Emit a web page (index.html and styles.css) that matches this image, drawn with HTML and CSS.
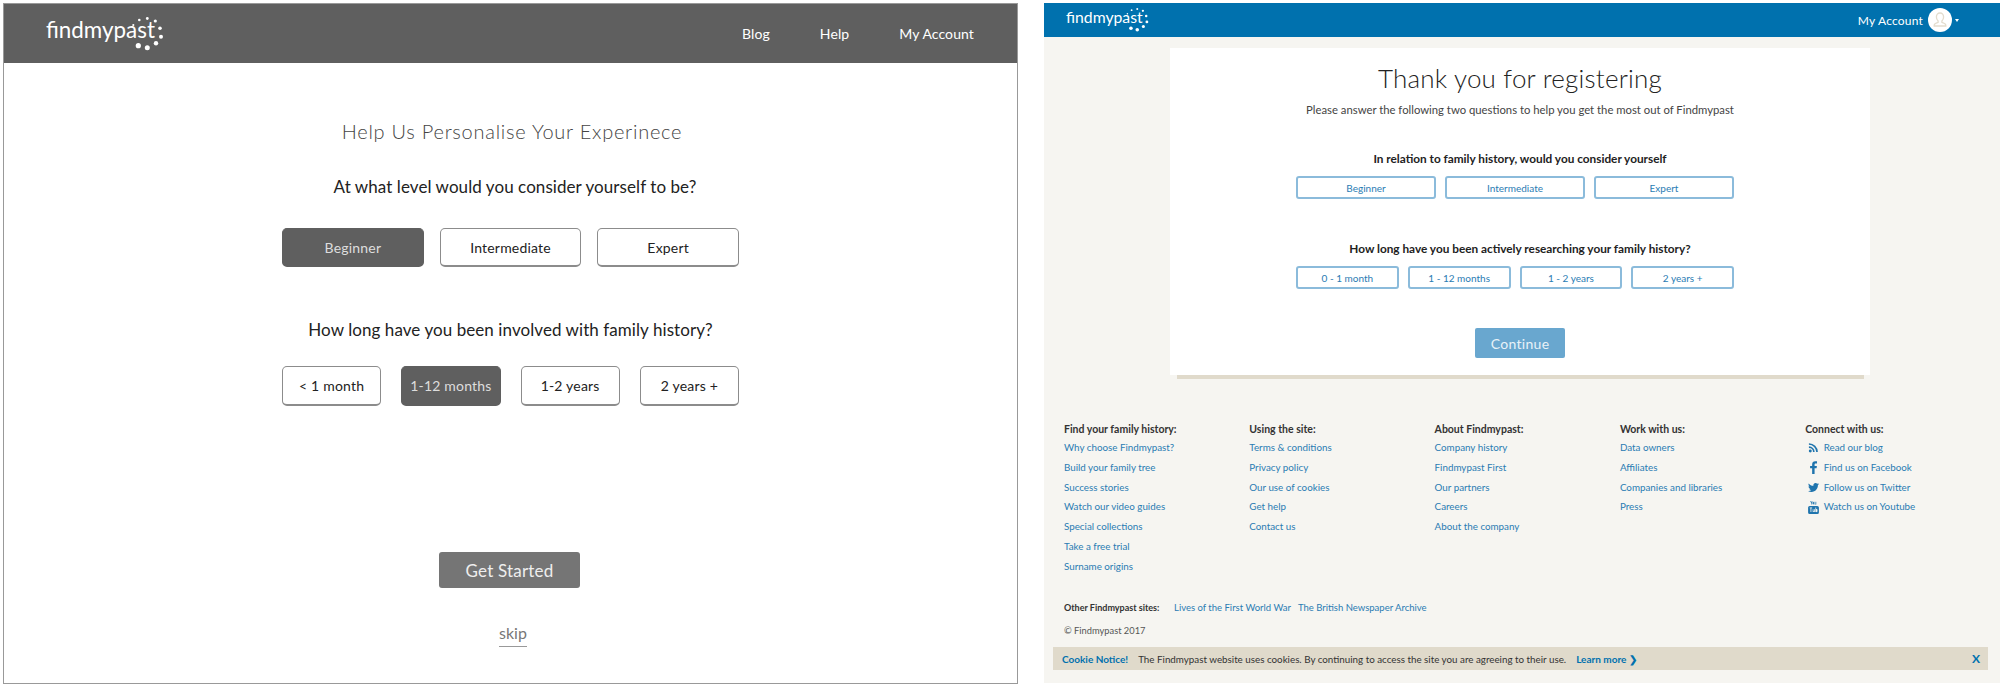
FILE: index.html
```html
<!DOCTYPE html>
<html lang="en">

<head>
    <meta charset="UTF-8">
    <meta name="viewport" content="width=device-width, initial-scale=1.0">
    <title>Findmypast onboarding</title>
    <link rel="stylesheet" href="styles.css">
</head>

<body>
    <div class="page">

        <!-- wireframe -->
        <section class="wire">
            <header class="wire-top">
                <svg class="logo-big" viewBox="0 0 118 34" aria-label="findmypast">
                    <text class="logo-text" x="0" y="21" textLength="109" lengthAdjust="spacingAndGlyphs">findmypast</text>
                    <g class="logo-dots">
                        <circle cx="87.3" cy="8" r="1.1"></circle>
                        <circle cx="93.3" cy="3" r="1.3"></circle>
                        <circle cx="101.3" cy="1.5" r="1.4"></circle>
                        <circle cx="109.3" cy="4" r="1.6"></circle>
                        <circle cx="114" cy="11.3" r="1.8"></circle>
                        <circle cx="115" cy="19.7" r="2"></circle>
                        <circle cx="110" cy="26.3" r="2.2"></circle>
                        <circle cx="101.3" cy="30.7" r="2.5"></circle>
                        <circle cx="92.3" cy="28.7" r="2.6"></circle>
                    </g>
                </svg>
                <nav class="wire-nav">
                    <a>Blog</a>
                    <a>Help</a>
                    <a>My Account</a>
                </nav>
            </header>

            <div class="wire-main">
                <h1 class="wire-title">Help Us Personalise Your Experinece</h1>
                <p class="wire-q wire-q-first">At what level would you consider yourself to be?</p>
                <div class="wire-row wire-row-three">
                    <a class="wire-btn on">Beginner</a>
                    <a class="wire-btn">Intermediate</a>
                    <a class="wire-btn">Expert</a>
                </div>
                <p class="wire-q wire-q-second">How long have you been involved with family history?</p>
                <div class="wire-row wire-row-four">
                    <a class="wire-btn">&lt; 1 month</a>
                    <a class="wire-btn on">1-12 months</a>
                    <a class="wire-btn">1-2 years</a>
                    <a class="wire-btn">2 years +</a>
                </div>
                <a class="wire-start">Get Started</a>
                <a class="wire-skip">skip</a>
            </div>
        </section>

        <!-- live site -->
        <section class="site">
            <header class="site-top">
                <svg class="logo-small" viewBox="0 0 118 34" aria-label="findmypast">
                    <text class="logo-text" x="0" y="21" textLength="109" lengthAdjust="spacingAndGlyphs">findmypast</text>
                    <g class="logo-dots">
                        <circle cx="87.3" cy="8" r="1.1"></circle>
                        <circle cx="93.3" cy="3" r="1.3"></circle>
                        <circle cx="101.3" cy="1.5" r="1.4"></circle>
                        <circle cx="109.3" cy="4" r="1.6"></circle>
                        <circle cx="114" cy="11.3" r="1.8"></circle>
                        <circle cx="115" cy="19.7" r="2"></circle>
                        <circle cx="110" cy="26.3" r="2.2"></circle>
                        <circle cx="101.3" cy="30.7" r="2.5"></circle>
                        <circle cx="92.3" cy="28.7" r="2.6"></circle>
                    </g>
                </svg>
                <div class="account">
                    <span>My Account</span>
                    <svg class="avatar" viewBox="0 0 24 24">
                        <circle cx="12" cy="12" r="12" fill="#fff"></circle>
                        <path d="M12 5c-2.3 0-3.6 1.8-3.6 4 0 1.700.7 3 1.700 3.900v1.400c-1.800.5-3.700 1.100-3.900 2.700v1h11.600v-1c-.2-1.600-2.100-2.200-3.900-2.700v-1.400c1-.9 1.700-2.200 1.700-3.900 0-2.200-1.300-4-3.600-4z" fill="none" stroke="#e3dccd" stroke-width="1.300"></path>
                    </svg>
                    <i class="caret"></i>
                </div>
            </header>

            <div class="card">
                <h1 class="card-title">Thank you for registering</h1>
                <p class="card-sub">Please answer the following two questions to help you get the most out of Findmypast</p>
                <p class="card-q card-q-first">In relation to family history, would you consider yourself</p>
                <div class="card-row">
                    <a class="card-btn">Beginner</a>
                    <a class="card-btn">Intermediate</a>
                    <a class="card-btn">Expert</a>
                </div>
                <p class="card-q card-q-second">How long have you been actively researching your family history?</p>
                <div class="card-row">
                    <a class="card-btn">0 - 1 month</a>
                    <a class="card-btn">1 - 12 months</a>
                    <a class="card-btn">1 - 2 years</a>
                    <a class="card-btn">2 years +</a>
                </div>
                <a class="card-go">Continue</a>
            </div>
            <div class="card-shade"></div>

            <footer class="foot">
                <div class="foot-cols">
                    <ul>
                        <li class="foot-head">Find your family history:</li>
                        <li>Why choose Findmypast?</li>
                        <li>Build your family tree</li>
                        <li>Success stories</li>
                        <li>Watch our video guides</li>
                        <li>Special collections</li>
                        <li>Take a free trial</li>
                        <li>Surname origins</li>
                    </ul>
                    <ul>
                        <li class="foot-head">Using the site:</li>
                        <li>Terms &amp; conditions</li>
                        <li>Privacy policy</li>
                        <li>Our use of cookies</li>
                        <li>Get help</li>
                        <li>Contact us</li>
                    </ul>
                    <ul>
                        <li class="foot-head">About Findmypast:</li>
                        <li>Company history</li>
                        <li>Findmypast First</li>
                        <li>Our partners</li>
                        <li>Careers</li>
                        <li>About the company</li>
                    </ul>
                    <ul>
                        <li class="foot-head">Work with us:</li>
                        <li>Data owners</li>
                        <li>Affiliates</li>
                        <li>Companies and libraries</li>
                        <li>Press</li>
                    </ul>
                    <ul>
                        <li class="foot-head">Connect with us:</li>
                        <li class="social">
                            <svg viewBox="0 0 24 24"><circle cx="5" cy="19.500" r="3.200"></circle><path d="M2 9.500a12.500 12.500 0 0 1 12.500 12.500h-3.600a8.900 8.900 0 0 0-8.900-8.900zM2 2.500a19.500 19.500 0 0 1 19.500 19.500h-3.600a15.900 15.900 0 0 0-15.900-15.900z"></path></svg>
                            Read our blog
                        </li>
                        <li class="social">
                            <svg viewBox="2 0 20 24"><path d="M14 24v-10.500h3.700l.6-4.300h-4.300v-2.700c0-1.300.4-2.100 2.200-2.100h2.300v-3.900c-.4 0-1.800-.2-3.400-.2-3.300 0-5.600 2-5.600 5.800v3.100h-3.800v4.300h3.800v10.500z"></path></svg>
                            Find us on Facebook
                        </li>
                        <li class="social">
                            <svg viewBox="0 0 24 24"><path d="M23.953 4.570a10 10 0 0 1-2.825.775 4.958 4.958 0 0 0 2.163-2.723c-.951.555-2.005.959-3.127 1.184a4.920 4.920 0 0 0-8.384 4.482C7.690 8.095 4.067 6.130 1.640 3.162a4.822 4.822 0 0 0-.666 2.475c0 1.710.870 3.213 2.188 4.096a4.904 4.904 0 0 1-2.228-.616v.060a4.923 4.923 0 0 0 3.946 4.827 4.996 4.996 0 0 1-2.212.085 4.936 4.936 0 0 0 4.604 3.417 9.867 9.867 0 0 1-6.102 2.105c-.390 0-.779-.023-1.170-.067a13.995 13.995 0 0 0 7.557 2.209c9.053 0 13.998-7.496 13.998-13.985 0-.210 0-.420-.015-.630A9.935 9.935 0 0 0 24 4.590z"></path></svg>
                            Follow us on Twitter
                        </li>
                        <li class="social">
                            <svg viewBox="2 0 20 24"><path d="M6 0l1.500 3.500v3h1.200v-3l1.500-3.500h-1.200l-.9 2.300-.9-2.300zM11.500 1.500c-.8 0-1.300.5-1.300 1.300v2.500c0 .8.500 1.300 1.300 1.300s1.300-.5 1.300-1.300v-2.500c0-.8-.5-1.300-1.300-1.300zM14 1.500v4.300c0 .6.500.9 1 .7l1-.5v.4h1.100v-4.900h-1.100v3.700l-.9.500v-4.200z"></path><path fill-rule="evenodd" d="M5 9h14a3 3 0 0 1 3 3v9a3 3 0 0 1-3 3h-14a3 3 0 0 1-3-3v-9a3 3 0 0 1 3-3zM5 12v1.500h1.500v7h1.500v-7h1.500v-1.500zM10.500 15v4.500c0 1.200 1.200 1.300 2.500.4v.6h1.400v-5.500h-1.400v3.700c-.5.400-1.100.5-1.100 0v-3.700zM15.500 12v8.500h1.400v-.5c1.100 1 2.400.6 2.400-.9v-2.500c0-1.700-1.300-2-2.400-1.200v-3.400z"></path></svg>
                            Watch us on Youtube
                        </li>
                    </ul>
                </div>
                <div class="foot-other">
                    <b>Other Findmypast sites:</b>
                    <a class="foot-other-first">Lives of the First World War</a>
                    <a>The British Newspaper Archive</a>
                </div>
                <p class="foot-copy">© Findmypast 2017</p>
            </footer>

            <div class="cookie">
                <b class="cookie-name">Cookie Notice!</b>
                <span class="cookie-text">The Findmypast website uses cookies. By continuing to access the site you are agreeing to their use.</span>
                <b class="cookie-more">Learn more ❯</b>
                <b class="cookie-close">X</b>
            </div>
        </section>
    </div>
</body>

</html>
```

FILE: styles.css
```css
* {
    box-sizing: border-box;
}

html,
body {
    margin: 0;
    padding: 0;
    background: #fff;
}

h1,
p,
ul,
li {
    margin: 0;
    padding: 0;
}

li {
    list-style: none;
}

.page {
    display: flex;
    width: 2000px;
    height: 687px;
    overflow: hidden;
    font-family: Lato, "Liberation Sans", sans-serif;
}

/* wireframe */
.wire {
    width: 1015px;
    height: 681px;
    margin: 3px 0 0 3px;
    border: 1px solid #999;
    flex: none;
}

.wire-top {
    display: flex;
    justify-content: space-between;
    align-items: center;
    height: 59px;
    padding: 0 43px 0 42px;
    background: #5f5f5f;
}

.logo-big {
    width: 118px;
    height: 34px;
    margin-top: 1px;
    overflow: visible;
}

.logo-small {
    width: 83px;
    height: 24px;
    overflow: visible;
}

.logo-text {
    font-family: Lato, "Liberation Sans", sans-serif;
    font-weight: 400;
    font-size: 23px;
    fill: #fff;
}

.logo-dots {
    fill: #fff;
}

.wire-nav {
    display: flex;
    gap: 50px;
    color: #fff;
    font-size: 14px;
    letter-spacing: 0.1px;
}

.wire-main {
    display: flex;
    flex-direction: column;
    align-items: center;
    color: #222;
}

.wire-title {
    margin: 54px 0 0 3px;
    font-size: 20px;
    font-weight: 300;
    line-height: 28px;
    letter-spacing: 0.75px;
    color: #444;
}

.wire-q {
    font-size: 17px;
    line-height: 24px;
    letter-spacing: 0.07px;
}

.wire-q-first {
    margin: 30px 0 0 9px;
}

.wire-q-second {
    margin-top: 51px;
}

.wire-row {
    display: flex;
    width: 457px;
}

.wire-row-three {
    gap: 16px;
    height: 39px;
    margin-top: 29px;
}

.wire-row-four {
    gap: 20px;
    height: 40px;
    margin-top: 24px;
}

.wire-btn {
    flex: 1;
    display: flex;
    justify-content: center;
    align-items: center;
    border: 1px solid #8c8c8c;
    border-bottom-width: 2px;
    border-radius: 5px;
    background: #fff;
    font-size: 14px;
    letter-spacing: 0.2px;
}

.wire-btn.on {
    background: #5f5f5f;
    border-color: #5f5f5f;
    color: #ddd;
}

.wire-start {
    display: flex;
    justify-content: center;
    align-items: center;
    width: 141px;
    height: 36px;
    margin: 146px 2px 0 0;
    border-radius: 3px;
    background: #757575;
    color: #eee;
    font-size: 17px;
    letter-spacing: 0.2px;
}

.wire-skip {
    margin: 35px 0 0 5px;
    padding-bottom: 3px;
    border-bottom: 1px solid #999;
    color: #777;
    font-size: 16px;
    line-height: 20px;
}

/* live site */
.site {
    display: flex;
    flex-direction: column;
    width: 956px;
    height: 680px;
    margin: 3px 0 0 26px;
    background: #f6f5f1;
    flex: none;
}

.site-top {
    display: flex;
    justify-content: space-between;
    align-items: center;
    height: 34px;
    padding: 0 41px 0 22px;
    background: #0071ae;
    color: #fff;
}

.account {
    display: flex;
    align-items: center;
    font-size: 12px;
    letter-spacing: 0.2px;
}

.avatar {
    width: 24px;
    height: 24px;
    margin-left: 5px;
}

.caret {
    width: 0;
    height: 0;
    margin-left: 3px;
    border: 2.5px solid transparent;
    border-top: 3px solid #fff;
    border-bottom: 0;
}

.card {
    display: flex;
    flex-direction: column;
    align-items: center;
    width: 700px;
    height: 327px;
    margin: 11px 0 0 126px;
    padding-top: 12px;
    background: #fff;
}

.card-title {
    font-size: 26px;
    font-weight: 300;
    line-height: 36px;
    letter-spacing: 0.2px;
    color: #222;
}

.card-sub {
    margin-top: 5px;
    font-size: 11.300px;
    line-height: 18px;
    color: #444;
}

.card-q {
    font-size: 11.800px;
    font-weight: 700;
    line-height: 18px;
    color: #222;
}

.card-q-first {
    margin-top: 31px;
}

.card-q-second {
    margin-top: 41px;
}

.card-row {
    display: flex;
    gap: 9px;
    align-self: flex-start;
    width: 438px;
    height: 23px;
    margin: 8px 0 0 126px;
}

.card-btn {
    flex: 1;
    display: flex;
    justify-content: center;
    align-items: center;
    border: 2px solid #8bbbdb;
    border-radius: 3px;
    color: #2a7cb3;
    font-size: 10px;
}

.card-go {
    display: flex;
    justify-content: center;
    align-items: center;
    width: 90px;
    height: 30px;
    margin-top: 39px;
    border-radius: 2px;
    background: #69a7cf;
    color: #e8f2f8;
    font-size: 14px;
    letter-spacing: 0.3px;
}

.card-shade {
    width: 687px;
    height: 4px;
    margin-left: 133px;
    background: #e0dacb;
}

.foot {
    padding-left: 20px;
    color: #2a7cb3;
    font-size: 9.800px;
}

.foot-cols {
    display: grid;
    grid-template-columns: repeat(5, 185.300px);
    height: 156.500px;
    margin-top: 43px;
}

.foot-cols li {
    line-height: 19.800px;
    white-space: nowrap;
}

.foot-cols .foot-head {
    margin-bottom: 2px;
    font-size: 10.500px;
    font-weight: 700;
    line-height: 14px;
    color: #333;
}

.social {
    display: flex;
    align-items: center;
    gap: 5px;
    margin-left: 2.500px;
}

.social svg {
    width: 11px;
    height: 13px;
    fill: #1f74ad;
    flex: none;
}

.foot-other {
    display: flex;
    align-items: center;
    height: 16px;
    margin-top: 21px;
    font-size: 9.500px;
}

.foot-other b {
    width: 110px;
    color: #333;
    font-size: 9px;
}

.foot-other-first {
    margin-right: 7px;
}

.foot-copy {
    margin-top: 8.500px;
    color: #555;
    font-size: 9.300px;
    line-height: 14px;
}

.cookie {
    display: flex;
    align-items: center;
    height: 23px;
    margin: 9px 12px 0 9px;
    padding: 0 8px 0 9px;
    background: #e0dacb;
    font-size: 9.800px;
}

.cookie-name {
    color: #0071ae;
    font-size: 10px;
}

.cookie-text {
    margin-left: 10px;
    color: #333;
}

.cookie-more {
    margin-left: 10px;
    color: #0071ae;
    font-size: 10px;
}

.cookie-close {
    margin-left: auto;
    color: #0071ae;
    font-size: 12px;
}
```
